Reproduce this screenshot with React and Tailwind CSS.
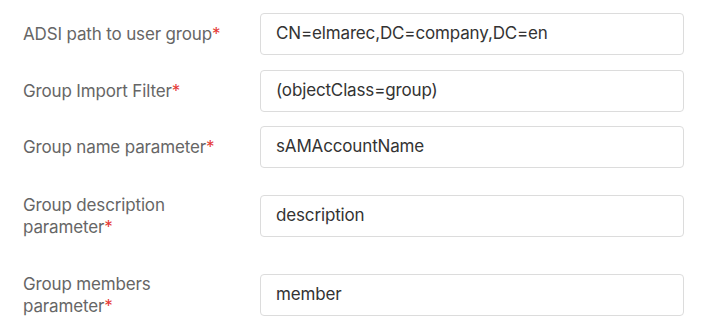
export default function App() {
  const rows = [
    { label: ["ADSI path to user group"], value: "CN=elmarec,DC=company,DC=en", mt: "mt-[13px]" },
    { label: ["Group Import Filter"], value: "(objectClass=group)", mt: "mt-[15px]" },
    { label: ["Group name parameter"], value: "sAMAccountName", mt: "mt-[14px]" },
    { label: ["Group description", "parameter"], value: "description", mt: "mt-[26px]" },
    { label: ["Group members", "parameter"], value: "member", mt: "mt-[35px]" },
  ];
  return (
    <div className="w-[710px] h-[334px] bg-white overflow-hidden" style={{ fontFamily: "Inter, 'Liberation Sans', sans-serif" }}>
      {rows.map((r, i) => (
        <div key={i} className={`flex items-center pl-[23px] pr-[26px] ${r.mt}`}>
          <div className="w-[237px] shrink-0 text-[17px] tracking-[-0.15px] leading-[22px] text-[#666]">
            {r.label.map((l, j) => (
              <div key={j}>
                {l}
                {j === r.label.length - 1 && <span className="text-[#e53935]">*</span>}
              </div>
            ))}
          </div>
          <div className="flex-1 h-[42px] border border-[#dcdcdc] rounded-[4px] flex items-center px-[15px] text-[17px] tracking-[-0.15px] text-[#333]">
            {r.value}
          </div>
        </div>
      ))}
    </div>
  );
}
